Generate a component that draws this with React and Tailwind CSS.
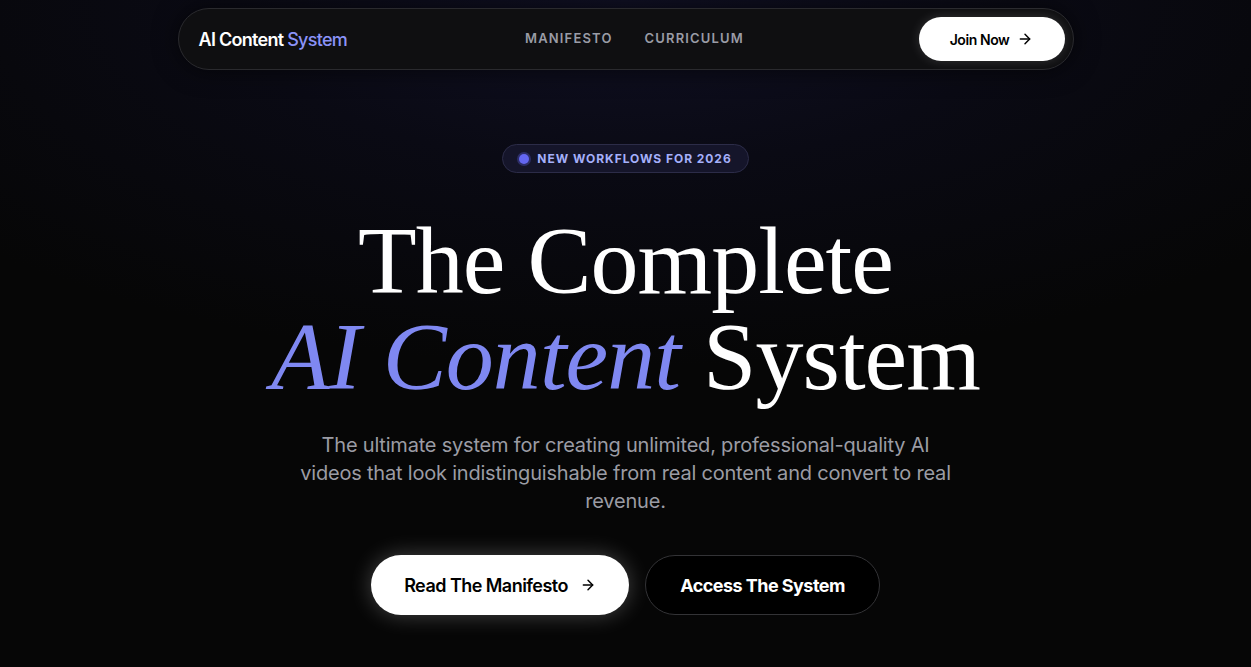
import { ArrowRight } from 'lucide-react';

const sans = { fontFamily: 'Inter, "Open Sans", Arial, sans-serif' };

export default function App() {
  return (
    <div
      className="min-h-screen w-full bg-[#060606] bg-[radial-gradient(ellipse_70%_55%_at_50%_0%,#101024_0%,#0a0a14_45%,#060606_100%)] text-white flex flex-col items-center"
      style={sans}
    >
      {/* Navbar */}
      <nav className="mt-2 w-[896px] h-[62px] rounded-full bg-[#0f0f11] border border-[#2a2a2e] shadow-[0_0_24px_rgba(0,0,0,0.6)] flex items-center justify-between pl-5 pr-2">
        <div className="text-[18px] font-semibold tracking-[-0.04em] w-[250px]">
          AI Content <span className="text-[#8b93f8] font-medium">System</span>
        </div>
        <div className="flex items-center gap-8 text-[13px] font-semibold tracking-[0.09em] text-[#9a9ca6] ml-[6px]">
          <a href="#">MANIFESTO</a>
          <a href="#">CURRICULUM</a>
        </div>
        <div className="w-[250px] flex justify-end">
          <button className="h-[44px] w-[146px] rounded-full bg-white text-black text-[14px] font-semibold tracking-[-0.03em] flex items-center justify-center gap-2 shadow-[0_0_12px_rgba(255,255,255,0.15)]">
            Join Now <ArrowRight className="w-4 h-4" strokeWidth={2.2} />
          </button>
        </div>
      </nav>

      {/* Badge */}
      <div className="mt-[74px] h-[29px] px-4 rounded-full bg-[#15152a] border border-[#2c2c48] flex items-center gap-2">
        <span className="w-[10px] h-[10px] rounded-full bg-[#6366f1] ring-2 ring-[#6366f1]/30" />
        <span className="text-[12px] font-bold tracking-[0.08em] text-[#a5b0fb]">NEW WORKFLOWS FOR 2026</span>
      </div>

      {/* Heading */}
      <h1
        className="mt-[40px] text-center text-[96px] leading-[96px] tracking-[-0.01em] font-normal"
        style={{ fontFamily: '"Liberation Serif", "Times New Roman", serif' }}
      >
        The Complete
        <br />
        <span className="italic text-[#7f88f1]">AI Content</span> System
      </h1>

      {/* Subtitle */}
      <p className="mt-[26px] max-w-[672px] text-center text-[20px] leading-[28px] text-[#9b9ca4] tracking-[-0.01em]">
        The ultimate system for creating unlimited, professional-quality AI videos that look indistinguishable from real content and convert to real revenue.
      </p>

      {/* Buttons */}
      <div className="mt-[40px] flex items-center gap-4">
        <button className="h-[60px] w-[258px] rounded-full bg-white text-black text-[18px] font-semibold tracking-[-0.03em] flex items-center justify-center gap-3 shadow-[0_0_22px_rgba(255,255,255,0.25)]">
          Read The Manifesto <ArrowRight className="w-4 h-4" strokeWidth={2.2} />
        </button>
        <button className="h-[60px] w-[235px] rounded-full bg-black border border-[#333336] text-white text-[18px] font-bold tracking-[-0.03em] flex items-center justify-center">
          Access The System
        </button>
      </div>
    </div>
  );
}
